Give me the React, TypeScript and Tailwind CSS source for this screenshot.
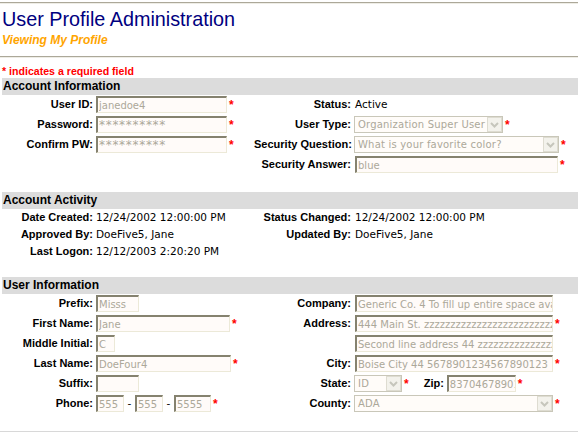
import type { ReactNode } from "react";

const LBL = "font-['Liberation_Sans',Arial,sans-serif] font-bold text-[11px] text-black whitespace-nowrap";
const VAL = "font-['DejaVu_Sans',Verdana,sans-serif] text-[10.5px] text-black whitespace-nowrap";

function Req() {
  return (
    <span className="ml-[2px] text-[#ff0000] font-['Liberation_Sans',Arial,sans-serif] font-bold text-[12px] leading-[12px]">
      *
    </span>
  );
}

function Inp({ w, v, pw, className = "" }: { w: string; v: string; pw?: boolean; className?: string }) {
  return (
    <input
      readOnly
      value={v}
      className={`${w} ${className} h-[17px] shrink-0 bg-[#fffbf9] border-t-2 border-l-2 border-r border-b border-t-[#85826f] border-l-[#85826f] border-r-[#ece9d8] border-b-[#ece9d8] pl-px text-[#aca899] font-['DejaVu_Sans',Verdana,sans-serif] outline-none ${pw ? "text-[12px] tracking-[0.7px]" : "text-[10px]"}`}
    />
  );
}

function Chevron() {
  return (
    <svg width="9" height="6" viewBox="0 0 9 6">
      <polyline points="1,1 4.5,4.5 8,1" fill="none" stroke="#c6c6bc" strokeWidth="2" />
    </svg>
  );
}

function Sel({ w, v }: { w: string; v: string }) {
  return (
    <div className={`${w} h-[17px] shrink-0 flex items-center border border-[#c9c7b9] bg-[#fffcf9]`}>
      <span className="flex-1 pl-[3px] truncate text-[#aca899] text-[10px] font-['DejaVu_Sans',Verdana,sans-serif] tracking-[0.2px]">
        {v}
      </span>
      <span className="w-[15px] h-[15px] flex items-center justify-center bg-[#f3f2ec] border border-[#dedcd1]">
        <Chevron />
      </span>
    </div>
  );
}

function Row({
  label,
  left,
  rlabel,
  right,
  tall = true,
}: {
  label?: string;
  left?: ReactNode;
  rlabel?: string;
  right?: ReactNode;
  tall?: boolean;
}) {
  return (
    <div className={tall ? "flex items-center h-[20px] pt-px pb-[2px]" : "flex items-center h-[17px]"}>
      <div className={`w-[93px] shrink-0 text-right ${LBL}`}>{label}</div>
      <div className="ml-[3px] w-[158px] shrink-0 flex items-center">{left}</div>
      <div className={`w-[97px] shrink-0 text-right ${LBL}`}>{rlabel}</div>
      <div className="ml-[3px] flex-1 flex items-center">{right}</div>
    </div>
  );
}

function Header({ children }: { children: ReactNode }) {
  return (
    <div className="ml-[2px] h-[17px] bg-[#dcdcdc] pl-px font-['Liberation_Sans',Arial,sans-serif] font-bold text-[12px] leading-[17px] text-black">
      {children}
    </div>
  );
}

export default function App() {
  return (
    <div className="w-[578px] h-[434px] overflow-hidden bg-white">
      <div className="h-[2px]" />
      <div className="h-px bg-[#aca899]" />
      <div className="h-px bg-[#eeede6]" />

      <div className="mt-[3px] h-[24px] pl-[2px] font-['Liberation_Sans',Arial,sans-serif] text-[19.8px] leading-[24px] text-[#000080] whitespace-nowrap">
        User Profile Administration
      </div>
      <div className="mt-[2px] h-[14px] pl-[2px] font-['Liberation_Sans',Arial,sans-serif] font-bold italic text-[12px] leading-[14px] text-[#ffa500]">
        Viewing My Profile
      </div>

      <div className="mt-[9px] h-px bg-[#aca899]" />
      <div className="h-px bg-[#eeede6]" />

      <div className="mt-[7px] h-[13px] pl-[2px] font-['Liberation_Sans',Arial,sans-serif] font-bold text-[10.6px] leading-[13px] text-[#ff0000]">
        * indicates a required field
      </div>

      <Header>Account Information</Header>
      <Row
        label="User ID:"
        left={
          <>
            <Inp w="w-[131px]" v="janedoe4" />
            <Req />
          </>
        }
        rlabel="Status:"
        right={<span className={`ml-[1px] ${VAL}`}>Active</span>}
      />
      <Row
        label="Password:"
        left={
          <>
            <Inp w="w-[131px]" v="**********" pw />
            <Req />
          </>
        }
        rlabel="User Type:"
        right={
          <>
            <Sel w="w-[149px]" v="Organization Super User" />
            <Req />
          </>
        }
      />
      <Row
        label="Confirm PW:"
        left={
          <>
            <Inp w="w-[131px]" v="**********" pw />
            <Req />
          </>
        }
        rlabel="Security Question:"
        right={
          <>
            <Sel w="w-[205px]" v="What is your favorite color?" />
            <Req />
          </>
        }
      />
      <Row
        rlabel="Security Answer:"
        right={
          <>
            <Inp w="w-[203px]" v="blue" className="ml-[1px]" />
            <Req />
          </>
        }
      />

      <div className="h-[17px]" />
      <Header>Account Activity</Header>
      <Row
        tall={false}
        label="Date Created:"
        left={<span className={VAL}>12/24/2002 12:00:00 PM</span>}
        rlabel="Status Changed:"
        right={<span className={`ml-[1px] ${VAL}`}>12/24/2002 12:00:00 PM</span>}
      />
      <Row
        tall={false}
        label="Approved By:"
        left={<span className={VAL}>DoeFive5, Jane</span>}
        rlabel="Updated By:"
        right={<span className={`ml-[1px] ${VAL}`}>DoeFive5, Jane</span>}
      />
      <Row tall={false} label="Last Logon:" left={<span className={VAL}>12/12/2003 2:20:20 PM</span>} />

      <div className="h-[17px]" />
      <Header>User Information</Header>
      <Row
        label="Prefix:"
        left={<Inp w="w-[43px]" v="Misss" />}
        rlabel="Company:"
        right={<Inp w="w-[198px]" v="Generic Co. 4 To fill up entire space available" className="ml-[1px]" />}
      />
      <Row
        label="First Name:"
        left={
          <>
            <Inp w="w-[134px]" v="Jane" />
            <Req />
          </>
        }
        rlabel="Address:"
        right={
          <>
            <Inp w="w-[198px]" v="444 Main St. zzzzzzzzzzzzzzzzzzzzzzzzzzzzzzzz" className="ml-[1px]" />
            <Req />
          </>
        }
      />
      <Row
        label="Middle Initial:"
        left={<Inp w="w-[19px]" v="C" />}
        right={<Inp w="w-[198px]" v="Second line address 44 zzzzzzzzzzzzzzzzzzzz" className="ml-[1px]" />}
      />
      <Row
        label="Last Name:"
        left={
          <>
            <Inp w="w-[135px]" v="DoeFour4" />
            <Req />
          </>
        }
        rlabel="City:"
        right={
          <>
            <Inp w="w-[198px]" v="Boise City 44 5678901234567890123" className="ml-[1px]" />
            <Req />
          </>
        }
      />
      <Row
        label="Suffix:"
        left={<Inp w="w-[43px]" v="" />}
        rlabel="State:"
        right={
          <>
            <Sel w="w-[48px]" v="ID" />
            <Req />
            <span className={`ml-[15px] ${LBL}`}>Zip:</span>
            <Inp w="w-[69px]" v="837046789012" className="ml-[3px]" />
            <Req />
          </>
        }
      />
      <Row
        label="Phone:"
        left={
          <>
            <Inp w="w-[28px]" v="555" />
            <span className={`w-[11px] text-center ${VAL}`}>-</span>
            <Inp w="w-[28px]" v="555" />
            <span className={`w-[11px] text-center ${VAL}`}>-</span>
            <Inp w="w-[37px]" v="5555" />
            <Req />
          </>
        }
        rlabel="County:"
        right={
          <>
            <Sel w="w-[199px]" v="ADA" />
            <Req />
          </>
        }
      />

      <div className="mt-[17px] h-px bg-[#d8d8d8]" />
    </div>
  );
}
